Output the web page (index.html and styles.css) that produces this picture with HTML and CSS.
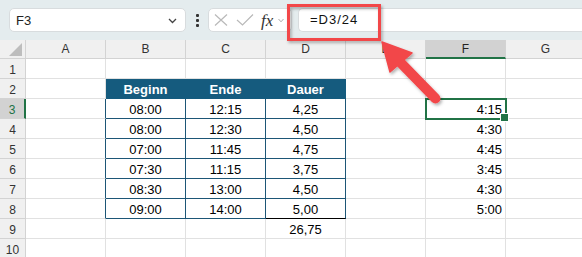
FILE: index.html
```html
<!DOCTYPE html>
<html lang="de">
<head>
  <meta charset="UTF-8">
  <title>Arbeitszeiten</title>
  <link rel="stylesheet" href="styles.css">
</head>
<body>
  <!-- Formula bar -->
  <div class="toolbar">
    <div class="namebox">
      <span>F3</span>
      <svg class="chev" width="9" height="6" viewBox="0 0 9 6"><path d="M1 1 L4.5 4.5 L8 1" fill="none" stroke="#444" stroke-width="1.3"/></svg>
    </div>
    <div class="dots"><i></i><i></i><i></i></div>
    <div class="fxbox">
      <svg width="14" height="12" viewBox="0 0 14 12"><path d="M1 0.5 L13 11.5 M13 0.5 L1 11.5" stroke="#b9b9b9" stroke-width="1.2" fill="none"/></svg>
      <svg width="18" height="12" viewBox="0 0 18 12"><path d="M1 6 L6.5 11 L17 0.5" stroke="#b9b9b9" stroke-width="1.2" fill="none"/></svg>
      <span class="fx">fx</span>
      <svg width="6" height="5" viewBox="0 0 6 5"><path d="M0.5 1 L3 3.8 L5.5 1" stroke="#aaa" stroke-width="1" fill="none"/></svg>
    </div>
    <div class="formula">=D3/24</div>
  </div>

  <!-- Sheet -->
  <div class="sheet">
    <div class="c h corner"><i></i></div>
    <div class="c h">A</div><div class="c h">B</div><div class="c h">C</div><div class="c h">D</div>
    <div class="c h">E</div><div class="c h active-col">F</div><div class="c h">G</div>

    <div class="c r">1</div>
    <div class="c"></div><div class="c"></div><div class="c"></div><div class="c"></div><div class="c"></div><div class="c"></div><div class="c"></div>

    <div class="c r">2</div>
    <div class="c"></div>
    <div class="c th">Beginn</div><div class="c th">Ende</div><div class="c th">Dauer</div>
    <div class="c"></div><div class="c"></div><div class="c"></div>

    <div class="c r active-row">3</div>
    <div class="c edge"></div>
    <div class="c tb">08:00</div><div class="c tb">12:15</div><div class="c tb">4,25</div>
    <div class="c"></div><div class="c num selected">4:15</div><div class="c"></div>

    <div class="c r">4</div>
    <div class="c edge"></div>
    <div class="c tb">08:00</div><div class="c tb">12:30</div><div class="c tb">4,50</div>
    <div class="c"></div><div class="c num">4:30</div><div class="c"></div>

    <div class="c r">5</div>
    <div class="c edge"></div>
    <div class="c tb">07:00</div><div class="c tb">11:45</div><div class="c tb">4,75</div>
    <div class="c"></div><div class="c num">4:45</div><div class="c"></div>

    <div class="c r">6</div>
    <div class="c edge"></div>
    <div class="c tb">07:30</div><div class="c tb">11:15</div><div class="c tb">3,75</div>
    <div class="c"></div><div class="c num">3:45</div><div class="c"></div>

    <div class="c r">7</div>
    <div class="c edge"></div>
    <div class="c tb">08:30</div><div class="c tb">13:00</div><div class="c tb">4,50</div>
    <div class="c"></div><div class="c num">4:30</div><div class="c"></div>

    <div class="c r">8</div>
    <div class="c edge"></div>
    <div class="c tb">09:00</div><div class="c tb">14:00</div><div class="c tb sum">5,00</div>
    <div class="c"></div><div class="c num">5:00</div><div class="c"></div>

    <div class="c r">9</div>
    <div class="c"></div><div class="c"></div><div class="c"></div>
    <div class="c center">26,75</div>
    <div class="c"></div><div class="c"></div><div class="c"></div>

    <div class="c r">10</div>
    <div class="c"></div><div class="c"></div><div class="c"></div><div class="c"></div><div class="c"></div><div class="c"></div><div class="c"></div>
  </div>

  <!-- Annotation: highlight box and arrow -->
  <svg class="annot" width="582" height="257" viewBox="0 0 582 257">
    <defs>
      <filter id="shadow" x="-20%" y="-20%" width="140%" height="140%">
        <feDropShadow dx="1.5" dy="2" stdDeviation="1.5" flood-color="#000" flood-opacity="0.3"/>
      </filter>
    </defs>
    <g filter="url(#shadow)">
      <rect x="288.5" y="5.5" width="91" height="34" fill="none" stroke="#f2474a" stroke-width="3"/>
      <line x1="399" y1="61" x2="435.5" y2="98.5" stroke="#f2474a" stroke-width="10" stroke-linecap="round"/>
      <polygon points="382,42 412,53 390,72" fill="#f2474a" stroke="#f2474a" stroke-width="1.5" stroke-linejoin="round"/>
    </g>
  </svg>
</body>
</html>
```

FILE: styles.css
```css
* {
  box-sizing: border-box;
}
body {
  margin: 0;
  width: 582px;
  height: 257px;
  overflow: hidden;
  position: relative;
  font-family: 'Liberation Sans', Arial, sans-serif;
  background: #fff;
  color: #000;
}

/* Formula bar */
.toolbar {
  height: 40px;
  background: #e4ecee;
  display: flex;
  align-items: flex-start;
  padding: 8px 0 0 9px;
}
.namebox {
  width: 177px;
  height: 24px;
  background: #fff;
  border: 1px solid #d8dcde;
  border-radius: 5px;
  display: flex;
  align-items: center;
  justify-content: space-between;
  padding: 0 8px 0 6px;
  font-size: 13px;
  color: #222;
}
.namebox .chev {
  margin-top: 1px;
}
.dots {
  width: 22px;
  height: 24px;
  display: flex;
  flex-direction: column;
  align-items: center;
  justify-content: center;
  gap: 2px;
}
.dots i {
  display: block;
  width: 3px;
  height: 3px;
  background: #333;
  border-radius: 1px;
}
.fxbox {
  width: 84px;
  height: 24px;
  background: #fff;
  border: 1px solid #d8dcde;
  border-radius: 5px;
  display: flex;
  align-items: center;
  padding: 0 0 0 5px;
  gap: 8px;
}
.fxbox .fx {
  font-family: 'Liberation Serif', 'Times New Roman', serif;
  font-style: italic;
  font-size: 17px;
  color: #333;
  margin-left: -1px;
  margin-right: -3px;
  line-height: 1;
}
.formula {
  flex: 1;
  height: 24px;
  margin-left: 6px;
  background: #fff;
  border: 1px solid #d8dcde;
  border-right: none;
  border-radius: 5px 0 0 5px;
  padding-left: 11px;
  font-size: 13px;
  letter-spacing: 1px;
  line-height: 22px;
  color: #111;
}

/* Sheet grid */
.sheet {
  display: grid;
  grid-template-columns: 26px repeat(7, 80px);
  grid-template-rows: 19px;
  grid-auto-rows: 20px;
}
.c {
  border-right: 1px solid #e1e1e1;
  border-bottom: 1px solid #e1e1e1;
  font-size: 13px;
  padding: 2px 3px 0;
  line-height: 17px;
  white-space: nowrap;
  overflow: hidden;
}
.h {
  background: #f0f0f0;
  border-color: #d3d3d3;
  text-align: center;
  font-size: 12px;
  padding: 0;
  line-height: 18px;
  color: #333;
}
.corner {
  display: flex;
  align-items: flex-end;
  justify-content: flex-end;
  padding: 0 3px 2px 0;
}
.corner i {
  display: block;
  width: 0;
  height: 0;
  border-left: 13px solid transparent;
  border-bottom: 13px solid #bdbdbd;
}
.r {
  background: #f0f0f0;
  border-color: #d3d3d3;
  text-align: center;
  font-size: 12px;
  padding: 3px 0 0;
  line-height: 16px;
  color: #333;
}
.active-col {
  background: #d2d2d2;
  border-bottom: 2px solid #217346;
  color: #222;
}
.active-row {
  background: #d2d2d2;
  border-right: 2px solid #217346;
  color: #217346;
}

/* Table B2:D8 */
.th {
  background: #155b7e;
  border-color: #155b7e;
  color: #fff;
  font-weight: bold;
  text-align: center;
}
.tb {
  border-right-color: #1d5676;
  border-bottom-color: #1d5676;
  text-align: center;
}
.edge {
  border-right-color: #1d5676;
}
.sum {
  border-bottom-color: #000;
}
.center {
  text-align: center;
}
.num {
  text-align: right;
}
.selected {
  overflow: visible;
  position: relative;
  z-index: 1;
  outline: 2px solid #217346;
  outline-offset: -1px;
}
.selected::after {
  content: "";
  position: absolute;
  right: -4px;
  bottom: -4px;
  width: 7px;
  height: 7px;
  background: #217346;
  border: 1px solid #fff;
}

/* Annotation overlay */
.annot {
  position: absolute;
  left: 0;
  top: 0;
  pointer-events: none;
  z-index: 5;
}
```
